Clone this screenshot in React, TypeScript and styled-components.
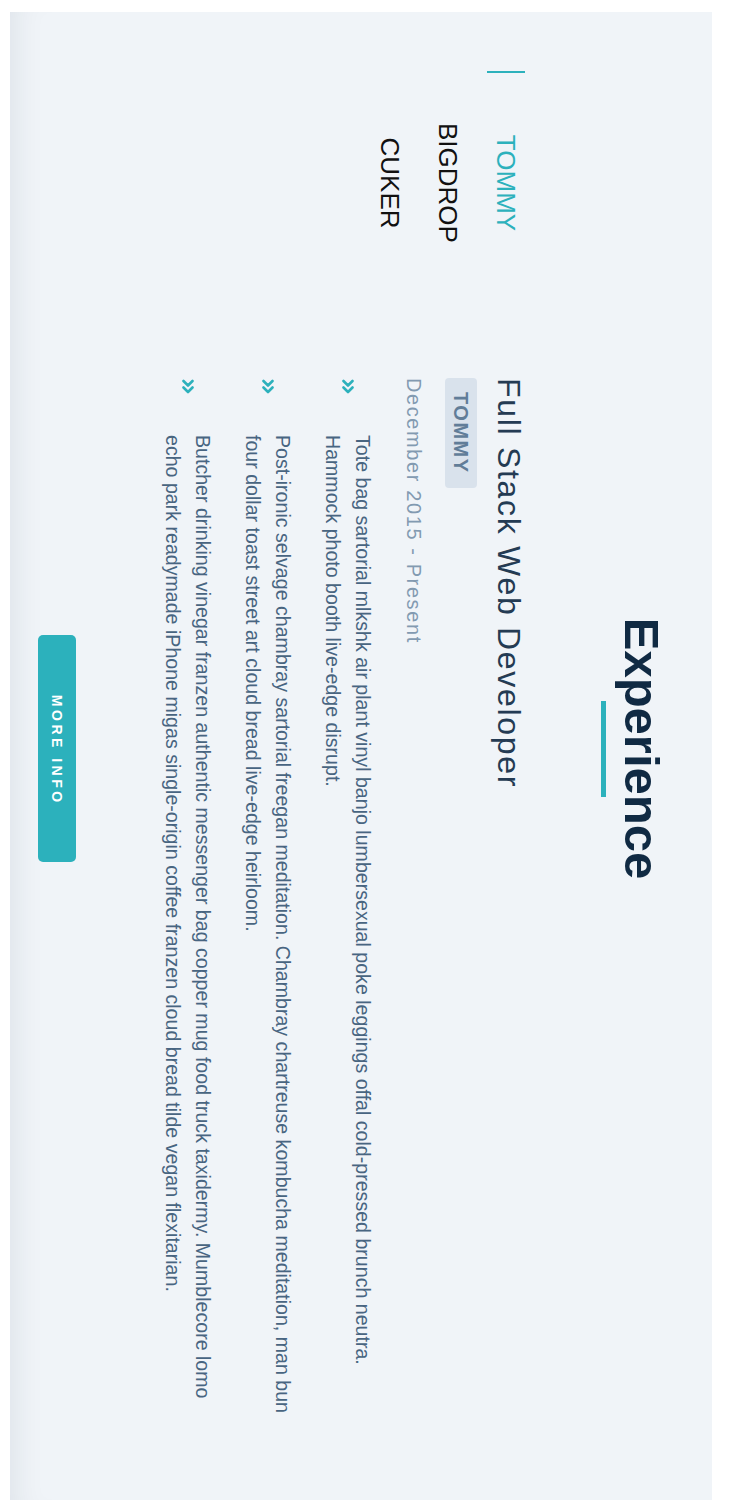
import React, { useState } from "react";
import styled, { createGlobalStyle } from "styled-components";

const GlobalStyle = createGlobalStyle`
  html, body {
    margin: 0;
    padding: 0;
    background: #ffffff;
    overflow: hidden;
  }
`;

/* The screenshot shows a landscape page turned a quarter turn clockwise. */
const Stage = styled.div`
  width: 702px;
  height: 1488px;
  margin: 12px 0 0 10px;
  overflow: hidden;
`;

const Page = styled.section`
  width: 1488px;
  height: 702px;
  box-sizing: border-box;
  padding: 46px 15px 0 0;
  background: #f0f4f8;
  transform-origin: 0 0;
  transform: translateX(702px) rotate(90deg);
  display: flex;
  flex-direction: column;
  align-items: center;
  font-family: "Liberation Sans", Arial, Helvetica, sans-serif;
  box-shadow: inset 0 -30px 30px -24px rgba(16, 42, 67, 0.08);
`;

const Heading = styled.h2`
  margin: 0;
  font-size: 49px;
  line-height: 1;
  font-weight: 700;
  color: #102a43;
`;

const Underline = styled.div`
  width: 96px;
  height: 5px;
  margin-top: 11px;
  background: #2cb1bc;
`;

const Body = styled.div`
  width: 1355px;
  margin-top: 76px;
  display: flex;
  gap: 85px;
`;

const TabList = styled.div`
  width: 222px;
  flex-shrink: 0;
  display: flex;
  flex-direction: column;
  gap: 20px;
`;

const Tab = styled.button<{ $active: boolean }>`
  height: 38px;
  padding: 0;
  border: none;
  border-left: 2px solid ${(p) => (p.$active ? "#2cb1bc" : "transparent")};
  background: transparent;
  display: flex;
  align-items: center;
  justify-content: center;
  font-family: inherit;
  font-size: 26px;
  line-height: 1;
  color: ${(p) => (p.$active ? "#2cb1bc" : "#111111")};
  cursor: pointer;
`;

const Content = styled.article`
  flex: 1;
  min-width: 0;
  display: flex;
  flex-direction: column;
  align-items: flex-start;
`;

const JobTitle = styled.h3`
  margin: 0;
  font-size: 32px;
  font-weight: 400;
  line-height: 1;
  letter-spacing: 1.7px;
  color: #243b53;
`;

const Badge = styled.span`
  margin-top: 16px;
  height: 32px;
  padding: 0 14px;
  border-radius: 4px;
  background: #d9e2ec;
  color: #617d98;
  font-size: 20px;
  font-weight: 700;
  line-height: 32px;
  letter-spacing: 1.5px;
  text-transform: uppercase;
`;

const DateLine = styled.p`
  margin: 16px 0 0;
  font-size: 20px;
  line-height: 30px;
  letter-spacing: 1.6px;
  color: #829ab1;
`;

const Duties = styled.ul`
  margin: 21px 0 0;
  padding: 0;
  list-style: none;
  width: 100%;
  display: flex;
  flex-direction: column;
  gap: 20px;
`;

const Duty = styled.li`
  display: flex;
  align-items: center;
  gap: 40px;
`;

const DutyIcon = styled.svg`
  flex-shrink: 0;
  width: 17px;
  height: 12px;
`;

const DutyText = styled.p`
  margin: 0;
  font-size: 19.6px;
  line-height: 30px;
  color: #486581;
`;

const MoreButton = styled.button`
  margin-top: 82px;
  width: 227px;
  height: 38px;
  border: none;
  border-radius: 5px;
  background: #2cb1bc;
  color: #ffffff;
  font-family: inherit;
  font-size: 14px;
  font-weight: 700;
  letter-spacing: 3.5px;
  padding: 0 0 0 3.5px;
  text-transform: uppercase;
  cursor: pointer;
`;

const DoubleChevron = () => (
  <DutyIcon viewBox="0 0 17 12" aria-hidden="true">
    <path
      d="M3 1.5 L7.5 6 L3 10.5 M9.5 1.5 L14 6 L9.5 10.5"
      fill="none"
      stroke="#2cb1bc"
      strokeWidth="2.6"
      strokeLinecap="round"
      strokeLinejoin="round"
    />
  </DutyIcon>
);

const companies = ["tommy", "bigdrop", "cuker"];

const duties = [
  "Tote bag sartorial mlkshk air plant vinyl banjo lumbersexual poke leggings offal cold-pressed brunch neutra. Hammock photo booth live-edge disrupt.",
  "Post-ironic selvage chambray sartorial freegan meditation. Chambray chartreuse kombucha meditation, man bun four dollar toast street art cloud bread live-edge heirloom.",
  "Butcher drinking vinegar franzen authentic messenger bag copper mug food truck taxidermy. Mumblecore lomo echo park readymade iPhone migas single-origin coffee franzen cloud bread tilde vegan flexitarian.",
];

export default function App() {
  const [active, setActive] = useState(0);
  return (
    <>
      <GlobalStyle />
      <Stage>
        <Page>
          <Heading>Experience</Heading>
          <Underline />
          <Body>
            <TabList>
              {companies.map((c, i) => (
                <Tab key={c} $active={i === active} onClick={() => setActive(i)}>
                  {c.toUpperCase()}
                </Tab>
              ))}
            </TabList>
            <Content>
              <JobTitle>Full Stack Web Developer</JobTitle>
              <Badge>tommy</Badge>
              <DateLine>December 2015 - Present</DateLine>
              <Duties>
                {duties.map((d) => (
                  <Duty key={d}>
                    <DoubleChevron />
                    <DutyText>{d}</DutyText>
                  </Duty>
                ))}
              </Duties>
            </Content>
          </Body>
          <MoreButton>More Info</MoreButton>
        </Page>
      </Stage>
    </>
  );
}
